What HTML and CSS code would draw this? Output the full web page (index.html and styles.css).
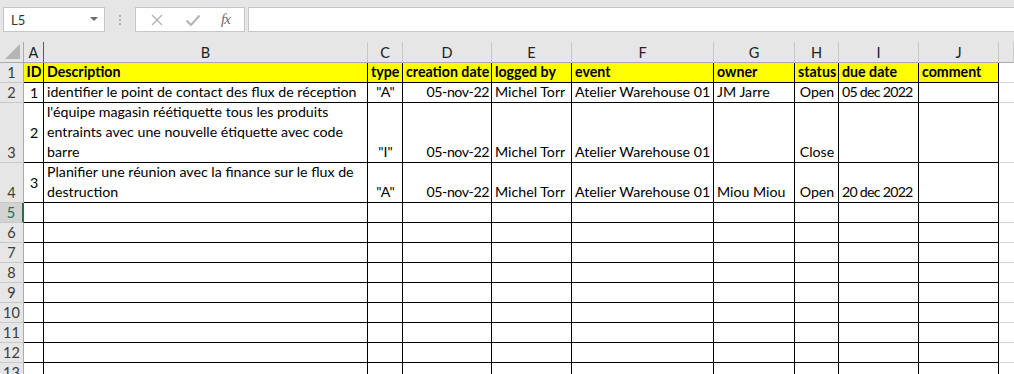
FILE: index.html
```html
<!DOCTYPE html>
<html lang="fr">
<head>
  <meta charset="UTF-8">
  <title>Actions - Atelier Warehouse</title>
  <link rel="stylesheet" href="styles.css">
</head>
<body>
  <!-- Formula bar -->
  <div class="formula-bar">
    <div class="name-box">
      <span>L5</span>
      <svg class="caret" width="8" height="5" viewBox="0 0 8 5"><path d="M0 0 H8 L4 4 Z" fill="#6b6b6b"/></svg>
    </div>
    <div class="grip"><i></i><i></i><i></i></div>
    <div class="fx-buttons">
      <svg width="14" height="14" viewBox="0 0 14 14"><path d="M2 2 L12 12 M12 2 L2 12" stroke="#b3b3b3" stroke-width="1.4" fill="none"/></svg>
      <svg width="16" height="14" viewBox="0 0 16 14"><path d="M1.5 7.5 L6 12 L14.5 2.5" stroke="#b3b3b3" stroke-width="2" fill="none"/></svg>
      <span class="fx">fx</span>
    </div>
    <div class="formula-input"></div>
  </div>

  <!-- Sheet -->
  <div class="sheet">
    <div class="corner"><svg width="15" height="15" viewBox="0 0 15 15"><path d="M15 0 V15 H0 Z" fill="#b4b4b4"/></svg></div>
    <div class="col-head">A</div>
    <div class="col-head">B</div>
    <div class="col-head">C</div>
    <div class="col-head">D</div>
    <div class="col-head">E</div>
    <div class="col-head">F</div>
    <div class="col-head">G</div>
    <div class="col-head">H</div>
    <div class="col-head">I</div>
    <div class="col-head">J</div>
    <div class="col-head"></div>

    <!-- row 1 -->
    <div class="rh">1</div>
    <div class="c hdr ctr">ID</div>
    <div class="c hdr">Description</div>
    <div class="c hdr">type</div>
    <div class="c hdr">creation date</div>
    <div class="c hdr">logged by</div>
    <div class="c hdr">event</div>
    <div class="c hdr">owner</div>
    <div class="c hdr">status</div>
    <div class="c hdr">due date</div>
    <div class="c hdr">comment</div>
    <div class="x"></div>

    <!-- row 2 -->
    <div class="rh">2</div>
    <div class="c ctr mid">1</div>
    <div class="c">identifier le point de contact des flux de réception</div>
    <div class="c ctr">"A"</div>
    <div class="c right date">05-nov-22</div>
    <div class="c">Michel Torr</div>
    <div class="c">Atelier Warehouse 01</div>
    <div class="c">JM Jarre</div>
    <div class="c ctr">Open</div>
    <div class="c due">05 dec 2022</div>
    <div class="c"></div>
    <div class="x"></div>

    <!-- row 3 -->
    <div class="rh">3</div>
    <div class="c ctr mid">2</div>
    <div class="c wrap">l'équipe magasin réétiquette tous les produits entraints avec une nouvelle étiquette avec code barre</div>
    <div class="c ctr">"I"</div>
    <div class="c right date">05-nov-22</div>
    <div class="c">Michel Torr</div>
    <div class="c">Atelier Warehouse 01</div>
    <div class="c"></div>
    <div class="c ctr">Close</div>
    <div class="c"></div>
    <div class="c"></div>
    <div class="x"></div>

    <!-- row 4 -->
    <div class="rh">4</div>
    <div class="c ctr mid">3</div>
    <div class="c wrap">Planifier une réunion avec la finance sur le flux de destruction</div>
    <div class="c ctr">"A"</div>
    <div class="c right date">05-nov-22</div>
    <div class="c">Michel Torr</div>
    <div class="c">Atelier Warehouse 01</div>
    <div class="c">Miou Miou</div>
    <div class="c ctr">Open</div>
    <div class="c due">20 dec 2022</div>
    <div class="c"></div>
    <div class="x"></div>

    <!-- empty rows -->
    <div class="rh selected">5</div>
    <div class="c"></div><div class="c"></div><div class="c"></div><div class="c"></div><div class="c"></div>
    <div class="c"></div><div class="c"></div><div class="c"></div><div class="c"></div><div class="c"></div>
    <div class="x"></div>

    <div class="rh">6</div>
    <div class="c"></div><div class="c"></div><div class="c"></div><div class="c"></div><div class="c"></div>
    <div class="c"></div><div class="c"></div><div class="c"></div><div class="c"></div><div class="c"></div>
    <div class="x"></div>

    <div class="rh">7</div>
    <div class="c"></div><div class="c"></div><div class="c"></div><div class="c"></div><div class="c"></div>
    <div class="c"></div><div class="c"></div><div class="c"></div><div class="c"></div><div class="c"></div>
    <div class="x"></div>

    <div class="rh">8</div>
    <div class="c"></div><div class="c"></div><div class="c"></div><div class="c"></div><div class="c"></div>
    <div class="c"></div><div class="c"></div><div class="c"></div><div class="c"></div><div class="c"></div>
    <div class="x"></div>

    <div class="rh">9</div>
    <div class="c"></div><div class="c"></div><div class="c"></div><div class="c"></div><div class="c"></div>
    <div class="c"></div><div class="c"></div><div class="c"></div><div class="c"></div><div class="c"></div>
    <div class="x"></div>

    <div class="rh">10</div>
    <div class="c"></div><div class="c"></div><div class="c"></div><div class="c"></div><div class="c"></div>
    <div class="c"></div><div class="c"></div><div class="c"></div><div class="c"></div><div class="c"></div>
    <div class="x"></div>

    <div class="rh">11</div>
    <div class="c"></div><div class="c"></div><div class="c"></div><div class="c"></div><div class="c"></div>
    <div class="c"></div><div class="c"></div><div class="c"></div><div class="c"></div><div class="c"></div>
    <div class="x"></div>

    <div class="rh">12</div>
    <div class="c"></div><div class="c"></div><div class="c"></div><div class="c"></div><div class="c"></div>
    <div class="c"></div><div class="c"></div><div class="c"></div><div class="c"></div><div class="c"></div>
    <div class="x"></div>

    <div class="rh">13</div>
    <div class="c"></div><div class="c"></div><div class="c"></div><div class="c"></div><div class="c"></div>
    <div class="c"></div><div class="c"></div><div class="c"></div><div class="c"></div><div class="c"></div>
    <div class="x"></div>
  </div>
</body>
</html>
```

FILE: styles.css
```css
body {
    margin: 0;
    padding: 0;
    background-color: #e6e6e6;
    font-family: Lato, "Liberation Sans", sans-serif;
    overflow: hidden;
}

/* formula bar */
.formula-bar {
    display: flex;
    align-items: flex-start;
    height: 42px;
    padding-top: 7px;
    box-sizing: border-box;
}

.name-box {
    display: flex;
    align-items: center;
    justify-content: space-between;
    width: 102px;
    height: 25px;
    margin-left: 3px;
    padding: 0 6px 0 7px;
    box-sizing: border-box;
    background-color: white;
    border: 1px solid #c6c6c6;
    font-size: 13px;
    color: #333;
}

.grip {
    display: flex;
    flex-direction: column;
    gap: 2px;
    width: 30px;
    align-items: center;
    padding-top: 8px;
}

.grip i {
    width: 2px;
    height: 2px;
    background-color: #b0b0b0;
}

.fx-buttons {
    display: flex;
    align-items: center;
    justify-content: space-around;
    width: 110px;
    height: 25px;
    box-sizing: border-box;
    background-color: white;
    border: 1px solid #c6c6c6;
    padding: 0 4px;
}

.fx {
    font-family: "Liberation Serif", serif;
    font-style: italic;
    font-size: 15px;
    color: #6b6b6b;
    letter-spacing: -1px;
}

.formula-input {
    flex: 1;
    height: 25px;
    margin-left: 3px;
    box-sizing: border-box;
    background-color: white;
    border: 1px solid #c6c6c6;
    border-right: none;
}

/* sheet grid */
.sheet {
    display: grid;
    grid-template-columns: 24px 20px 324px 35px 89px 80px 142px 81px 44px 80px 80px 1fr;
    grid-template-rows: 21px 20px 20px 60px 40px repeat(9, 20px);
    background-color: white;
    font-size: 14.2px;
    color: #000;
}

.sheet > div {
    box-sizing: border-box;
    overflow: hidden;
    white-space: nowrap;
}

.corner {
    display: flex;
    align-items: flex-end;
    justify-content: flex-end;
    padding: 0 3px 3px 0;
    background-color: #e6e6e6;
    border-right: 1px solid #ababab;
    border-bottom: 1px solid #ababab;
}

.col-head {
    display: flex;
    align-items: center;
    justify-content: center;
    padding-top: 1px;
    background-color: #e6e6e6;
    border-right: 1px solid #c8c8c8;
    border-bottom: 1px solid #ababab;
    color: #222;
    font-size: 14.5px;
}

.col-head:nth-child(2) {
    border-right-color: #5a5a5a;
}

.rh {
    display: flex;
    align-items: flex-end;
    justify-content: center;
    line-height: 19px;
    background-color: #e6e6e6;
    border-right: 1px solid #ababab;
    border-bottom: 1px solid #c8c8c8;
    color: #3c3c3c;
    font-size: 14.5px;
}

.rh.selected {
    background-color: #d2d2d2;
    border-right: 2px solid #217346;
    color: #217346;
}

.c {
    display: flex;
    align-items: flex-end;
    padding: 0 2px 0 3px;
    line-height: 20px;
    border-right: 1px solid #000;
    border-bottom: 1px solid #000;
}

.c.wrap {
    white-space: normal;
}

.c.ctr {
    justify-content: center;
}

.c.mid {
    align-items: center;
}

.c.right {
    justify-content: flex-end;
}

.c.date {
    letter-spacing: -0.45px;
}

.c.due {
    letter-spacing: -0.75px;
}

.hdr {
    background-color: #ffff00;
    font-weight: bold;
}

.x {
    border-bottom: 1px solid #d4d4d4;
}
```
